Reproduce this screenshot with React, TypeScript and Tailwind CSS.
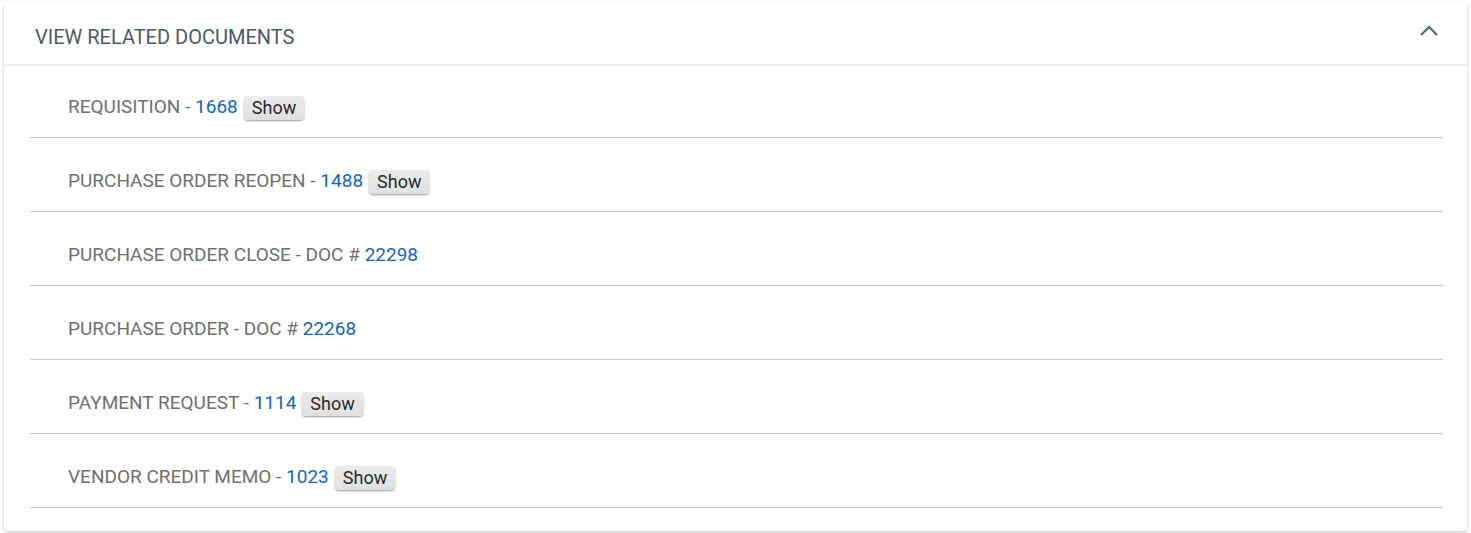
import React from "react";

const rows: { label: string; num: string; show: boolean }[] = [
  { label: "REQUISITION - ", num: "1668", show: true },
  { label: "PURCHASE ORDER REOPEN - ", num: "1488", show: true },
  { label: "PURCHASE ORDER CLOSE - DOC # ", num: "22298", show: false },
  { label: "PURCHASE ORDER - DOC # ", num: "22268", show: false },
  { label: "PAYMENT REQUEST - ", num: "1114", show: true },
  { label: "VENDOR CREDIT MEMO - ", num: "1023", show: true },
];

export default function App() {
  return (
    <div className="w-[1471px] h-[533px] bg-white pt-[2px] px-[4px]" style={{ fontFamily: "Roboto, 'Liberation Sans', sans-serif" }}>
      <div className="h-[529px] bg-white rounded-[4px] shadow-[0_1px_3px_rgba(0,0,0,0.25)] flex flex-col">
        <div className="h-[64px] flex items-start justify-between pl-[31px] pr-[28px] pt-[23px] border-b-2 border-[#efefef]">
          <span className="text-[20px] leading-[24px] text-[#4b5a65]">VIEW RELATED DOCUMENTS</span>
          <svg width="20" height="12" viewBox="0 0 20 12" className="mt-[0px]">
            <path d="M2 10 L10 2 L18 10" fill="none" stroke="#4a6577" strokeWidth="2" />
          </svg>
        </div>
        <div className="pl-[26px] pr-[24px]">
          {rows.map((r) => (
            <div key={r.num} className="h-[74px] first:h-[72px] border-b border-[#c6c6c6] flex items-start pt-[30px] first:pt-[28px] pl-[38px]">
              <div className="flex items-center h-[26px]">
                <span className="text-[19px] text-[#707070] whitespace-pre">{r.label}</span>
                <span className="text-[19px] text-[#1565c0]">{r.num}</span>
                {r.show && (
                  <button className="ml-[6px] mt-[2px] h-[24px] px-[8px] text-[18px] text-[#2a2a2a] bg-gradient-to-b from-[#ebebeb] to-[#e0e0e0] rounded-[4px] shadow-[0_1px_2px_rgba(0,0,0,0.4)] leading-none">
                    Show
                  </button>
                )}
              </div>
            </div>
          ))}
        </div>
      </div>
    </div>
  );
}
